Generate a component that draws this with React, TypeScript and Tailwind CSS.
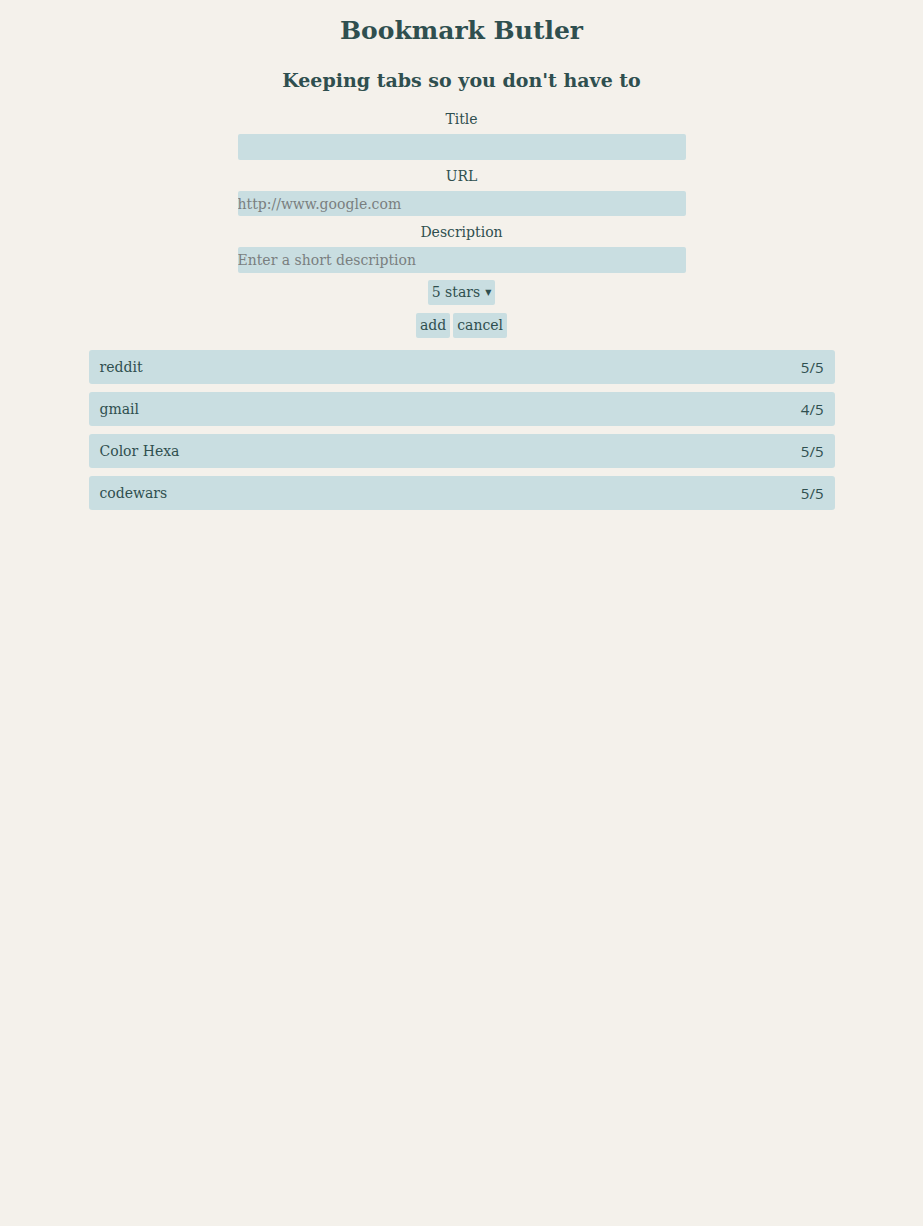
import { useState } from "react";

const bookmarks = [
  { title: "reddit", rating: 5 },
  { title: "gmail", rating: 4 },
  { title: "Color Hexa", rating: 5 },
  { title: "codewars", rating: 5 },
];

const serif = "font-['DejaVu_Serif',serif]";

export default function App() {
  const [stars, setStars] = useState("5");

  return (
    <div className={`min-h-[1226px] bg-[#f4f1eb] text-[#2f4f4f] ${serif}`}>
      <div className="flex flex-col items-center pt-[10px]">
        <h1 className="text-[25px] font-bold leading-[42px]">Bookmark Butler</h1>
        <h2 className="mt-[13px] text-[19px] font-bold leading-[30px]">Keeping tabs so you don't have to</h2>

        <form className="mt-[13px] flex flex-col items-center" onSubmit={(e) => e.preventDefault()}>
          <label className="text-[14px] leading-[22px]">Title</label>
          <input className="mt-[4px] h-[26px] w-[448px] rounded-[2px] bg-[#c9dee1] text-[14px] outline-none" />

          <label className="mt-[5px] text-[14px] leading-[22px]">URL</label>
          <input
            className="mt-[4px] h-[25px] w-[448px] rounded-[2px] bg-[#c9dee1] text-[14px] outline-none placeholder:text-[#7a7f7f]"
            placeholder="http://www.google.com"
          />

          <label className="mt-[5px] text-[14px] leading-[22px]">Description</label>
          <input
            className="mt-[4px] h-[26px] w-[448px] rounded-[2px] bg-[#c9dee1] text-[14px] outline-none placeholder:text-[#7a7f7f]"
            placeholder="Enter a short description"
          />

          <div className="relative mt-[7px] flex h-[25px] items-center rounded-[2px] bg-[#c9dee1] pl-[4px] pr-[4px] text-[14px]">
            <span>{stars} stars</span>
            <span className="ml-[5px] text-[8px]">▼</span>
            <select
              value={stars}
              onChange={(e) => setStars(e.target.value)}
              className="absolute inset-0 cursor-pointer opacity-0"
            >
              {["5", "4", "3", "2", "1"].map((s) => (
                <option key={s} value={s}>
                  {s} stars
                </option>
              ))}
            </select>
          </div>

          <div className="mt-[8px] flex gap-[3px]">
            <button className="h-[25px] rounded-[2px] bg-[#c9dee1] px-[4px] text-[14px]">add</button>
            <button className="h-[25px] rounded-[2px] bg-[#c9dee1] px-[4px] text-[14px]">cancel</button>
          </div>
        </form>

        <ul className="mt-[12px] flex w-[746px] flex-col gap-[8px]">
          {bookmarks.map((b) => (
            <li
              key={b.title}
              className="flex h-[34px] items-center justify-between rounded-[3px] bg-[#c9dee1] px-[11px] text-[14px]"
            >
              <span>{b.title}</span>
              <span className="font-['Open_Sans',sans-serif] text-[15px]">{b.rating}/5</span>
            </li>
          ))}
        </ul>
      </div>
    </div>
  );
}
